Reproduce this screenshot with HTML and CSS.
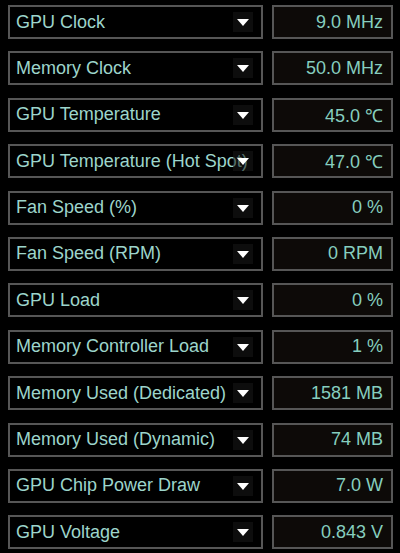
FILE: index.html
```html
<!doctype html>
<html>
<head>
<meta charset="UTF-8"/>
<link rel="stylesheet" href="styles.css">
<title>Sensors</title>
</head>
<body>
<section class="sensors">
  <div class="row"><div class="name"><span>GPU Clock</span><i class="drop"></i></div><div class="value">9.0 MHz</div></div>
  <div class="row"><div class="name"><span>Memory Clock</span><i class="drop"></i></div><div class="value">50.0 MHz</div></div>
  <div class="row"><div class="name"><span>GPU Temperature</span><i class="drop"></i></div><div class="value">45.0 &#8451;</div></div>
  <div class="row"><div class="name"><span>GPU Temperature (Hot Spot)</span><i class="drop"></i></div><div class="value">47.0 &#8451;</div></div>
  <div class="row"><div class="name"><span>Fan Speed (%)</span><i class="drop"></i></div><div class="value">0 %</div></div>
  <div class="row"><div class="name"><span>Fan Speed (RPM)</span><i class="drop"></i></div><div class="value">0 RPM</div></div>
  <div class="row"><div class="name"><span>GPU Load</span><i class="drop"></i></div><div class="value">0 %</div></div>
  <div class="row"><div class="name"><span>Memory Controller Load</span><i class="drop"></i></div><div class="value">1 %</div></div>
  <div class="row"><div class="name"><span>Memory Used (Dedicated)</span><i class="drop"></i></div><div class="value">1581 MB</div></div>
  <div class="row"><div class="name"><span>Memory Used (Dynamic)</span><i class="drop"></i></div><div class="value">74 MB</div></div>
  <div class="row"><div class="name"><span>GPU Chip Power Draw</span><i class="drop"></i></div><div class="value">7.0 W</div></div>
  <div class="row"><div class="name"><span>GPU Voltage</span><i class="drop"></i></div><div class="value">0.843 V</div></div>
</section>
</body>
</html>
```
FILE: styles.css
```css
html, body {
  background: #000;
}
body {
  margin: 0;
  padding: 5px 0 0 8px;
  font-family: "Liberation Sans", Arial, sans-serif;
  font-size: 18px;
}
.sensors {
  display: flex;
  flex-direction: column;
  gap: 12.4px;
}
.row {
  display: flex;
  gap: 9px;
  height: 34px;
}
.name, .value {
  box-sizing: border-box;
  border: 2px solid #565656;
  height: 34px;
  display: flex;
  align-items: center;
  white-space: nowrap;
  overflow: hidden;
}
.name {
  position: relative;
  width: 255px;
  padding-left: 6px;
  color: #9dd5cb;
  background: #000;
}
.value {
  width: 121px;
  justify-content: flex-end;
  padding-right: 8px;
  color: #86cebf;
  background: #0d0a08;
}
.drop {
  position: absolute;
  right: 8px;
  top: 5px;
  width: 20px;
  height: 20px;
  background: rgba(24, 24, 24, 0.55);
}
.drop::after {
  content: "";
  position: absolute;
  left: 4px;
  top: 7px;
  border-left: 6px solid transparent;
  border-right: 6px solid transparent;
  border-top: 7px solid #fff;
}
```
